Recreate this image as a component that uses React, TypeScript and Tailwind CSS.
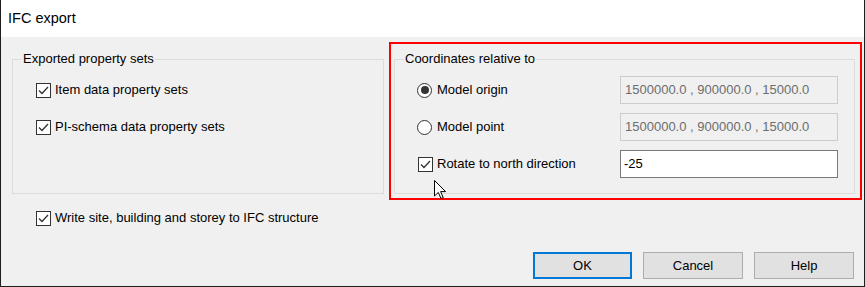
import * as React from "react";

const font = { fontFamily: '"Liberation Sans", Arial, sans-serif' };

function CheckBox({ label }: { label: string }) {
  return (
    <div className="flex h-[16px] items-center gap-[4px]">
      <span className="flex h-[15px] w-[15px] items-center justify-center border border-[#333333] bg-white">
        <svg width="13" height="13" viewBox="0 0 13 13" aria-hidden>
          <path d="M2 6.5 L5 9.5 L11 3" fill="none" stroke="#333333" strokeWidth="1.3" />
        </svg>
      </span>
      <span className="text-[13px] text-black">{label}</span>
    </div>
  );
}

function Radio({ label, checked }: { label: string; checked?: boolean }) {
  return (
    <div className="flex h-[16px] items-center gap-[5px]">
      <span className="flex h-[15px] w-[15px] items-center justify-center rounded-full border border-[#333333] bg-white">
        {checked ? <span className="h-[8px] w-[8px] rounded-full bg-[#333333]" /> : null}
      </span>
      <span className="text-[13px] text-black">{label}</span>
    </div>
  );
}

function Field({ value, disabled }: { value: string; disabled?: boolean }) {
  return (
    <div
      className={
        disabled
          ? "flex h-[28px] w-[218px] items-center border border-[#cccccc] bg-[#f0f0f0] pl-[4px] text-[13px] text-[#6d6d6d]"
          : "flex h-[28px] w-[218px] items-center border border-[#7a7a7a] bg-white pl-[3px] text-[13px] text-black"
      }
    >
      {value}
    </div>
  );
}

function GroupBox({ title, className, children }: { title: string; className: string; children: React.ReactNode }) {
  return (
    <div className={"relative h-[135px] border border-[#dcdcdc] " + className}>
      <span className="absolute left-[9px] top-[-9px] bg-[#f0f0f0] px-[1px] text-[13px] leading-[16px] text-black">
        {title}
      </span>
      {children}
    </div>
  );
}

function Button({ label, focused }: { label: string; focused?: boolean }) {
  return (
    <button
      className={
        focused
          ? "h-[27px] w-[99px] border-2 border-[#0078d7] bg-[#e1e1e1] text-[13px] text-black"
          : "h-[27px] w-[100px] border border-[#adadad] bg-[#e1e1e1] text-[13px] text-black"
      }
    >
      {label}
    </button>
  );
}

export default function App() {
  return (
    <div
      className="relative flex h-[287px] w-[865px] flex-col border-x border-b border-[#1e1e1e] bg-[#f0f0f0]"
      style={font}
    >
      <div className="flex h-[37px] items-center bg-white pl-[7px] text-[14.5px] text-black">IFC export</div>

      <div className="flex flex-1 flex-col pl-[11px] pr-[9px] pt-[22px] pb-[7px]">
        <div className="flex gap-[10px]">
          <GroupBox title="Exported property sets" className="w-[372px]">
            <div className="flex flex-col gap-[21px] pl-[23px] pt-[22px]">
              <CheckBox label="Item data property sets" />
              <CheckBox label="PI-schema data property sets" />
            </div>
          </GroupBox>
          <GroupBox title="Coordinates relative to" className="w-[461px]">
            <div className="grid grid-cols-[203px_218px] gap-y-[9px] pl-[22px] pt-[16px]">
              <div className="flex h-[28px] items-center">
                <Radio label="Model origin" checked />
              </div>
              <Field value="1500000.0 , 900000.0 , 15000.0" disabled />
              <div className="flex h-[28px] items-center">
                <Radio label="Model point" />
              </div>
              <Field value="1500000.0 , 900000.0 , 15000.0" disabled />
              <div className="flex h-[28px] items-center pl-[1px]">
                <CheckBox label="Rotate to north direction" />
              </div>
              <Field value="-25" />
            </div>
          </GroupBox>
        </div>

        <div className="mt-[16px] pl-[24px]">
          <CheckBox label="Write site, building and storey to IFC structure" />
        </div>

        <div className="mt-auto flex justify-end gap-[11px] pr-[1px]">
          <Button label="OK" focused />
          <Button label="Cancel" />
          <Button label="Help" />
        </div>
      </div>

      {/* annotation frame */}
      <div className="pointer-events-none absolute left-[388px] top-[42px] h-[158px] w-[473px] border-2 border-[#ff0000]" />

      {/* mouse pointer */}
      <svg className="pointer-events-none absolute left-[433px] top-[180px]" width="13" height="20" viewBox="0 0 13 20" aria-hidden>
        <path
          d="M0.5 0.5 L0.5 16 L4.3 12.4 L7 18.5 L9.2 17.6 L6.6 11.6 L11.6 11.6 Z"
          fill="#ffffff"
          stroke="#000000"
          strokeWidth="1"
          strokeLinejoin="miter"
        />
      </svg>
    </div>
  );
}
